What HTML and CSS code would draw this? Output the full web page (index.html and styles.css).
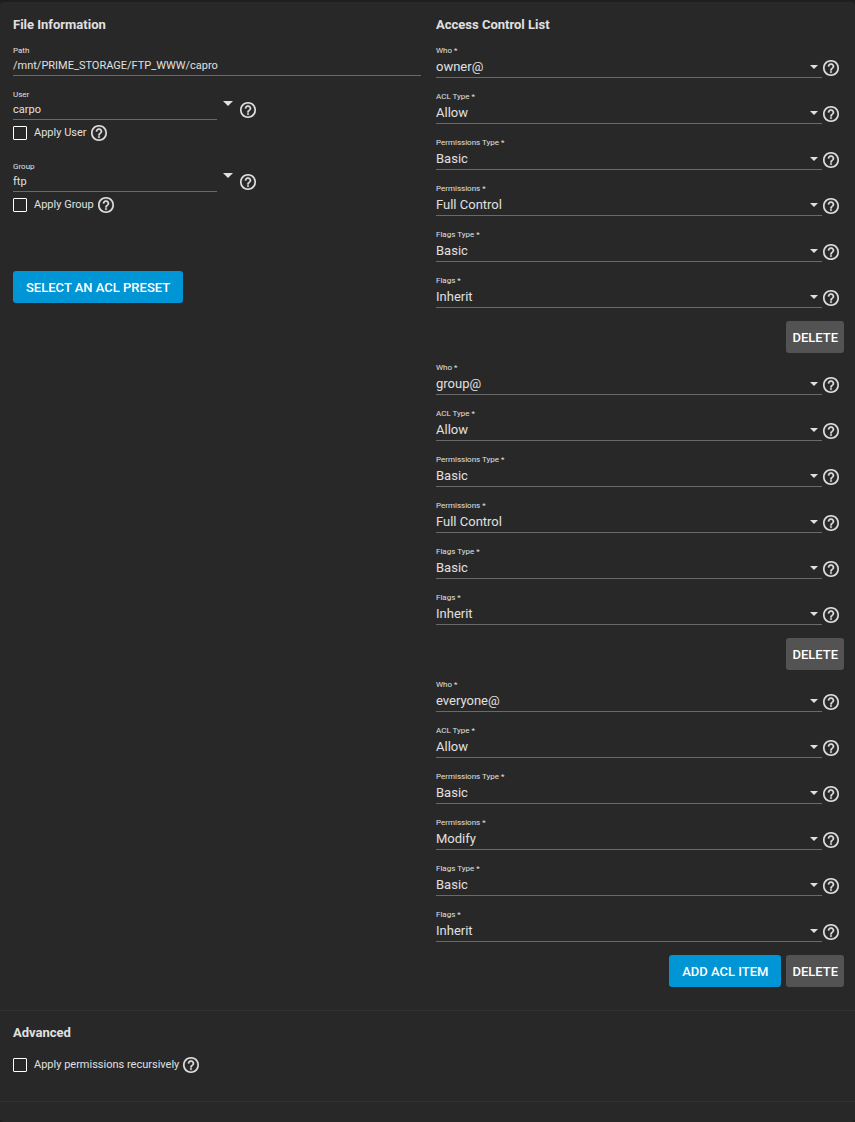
FILE: index.html
```html
<!DOCTYPE html>
<html lang="en">
  <head>
    <meta charset="UTF-8" />
    <meta name="viewport" content="width=device-width, initial-scale=1.0" />
    <title>Edit ACL</title>
    <link rel="stylesheet" href="styles.css">
  </head>
  <body>
    <svg class="sprite" aria-hidden="true">
      <symbol id="help" viewBox="2 2 20 20">
        <path d="M11 18h2v-2h-2v2zm1-16C6.480 2 2 6.480 2 12s4.480 10 10 10 10-4.480 10-10S17.520 2 12 2zm0 18c-4.410 0-8-3.590-8-8s3.590-8 8-8 8 3.590 8 8-3.590 8-8 8zm0-14c-2.210 0-4 1.790-4 4h2c0-1.100.9-2 2-2s2 .9 2 2c0 2-3 1.750-3 5h2c0-2.250 3-2.500 3-5 0-2.210-1.790-4-4-4z" />
      </symbol>
    </svg>
    <form class="card">
      <div class="columns">
        <section>
          <h2>File Information</h2>
          <div class="field">
            <label for="path">Path</label>
            <input type="text" id="path" value="/mnt/PRIME_STORAGE/FTP_WWW/capro" readonly />
          </div>
          <div class="owner">
            <div class="combo">
              <div class="field">
                <label for="user">User</label>
                <input type="text" id="user" value="carpo" />
              </div>
              <button type="button" class="toggle" aria-label="Show users"><span class="arrow"></span></button>
              <svg class="help"><use href="#help" /></svg>
            </div>
            <div class="check">
              <input type="checkbox" id="apply-user" />
              <label for="apply-user">Apply User</label>
              <svg class="help"><use href="#help" /></svg>
            </div>
          </div>
          <div class="owner">
            <div class="combo">
              <div class="field">
                <label for="group">Group</label>
                <input type="text" id="group" value="ftp" />
              </div>
              <button type="button" class="toggle" aria-label="Show groups"><span class="arrow"></span></button>
              <svg class="help"><use href="#help" /></svg>
            </div>
            <div class="check">
              <input type="checkbox" id="apply-group" />
              <label for="apply-group">Apply Group</label>
              <svg class="help"><use href="#help" /></svg>
            </div>
          </div>
          <button type="button" class="btn primary preset">SELECT AN ACL PRESET</button>
        </section>
        <section>
          <h2>Access Control List</h2>
          <div class="acl"></div>
        </section>
      </div>
      <section class="advanced">
        <h2>Advanced</h2>
        <div class="check">
          <input type="checkbox" id="recursive" />
          <label for="recursive">Apply permissions recursively</label>
          <svg class="help"><use href="#help" /></svg>
        </div>
      </section>
    </form>
    <script src="acl.js"></script>
  </body>
</html>
```

FILE: styles.css
```css
* {
  box-sizing: border-box;
}
body {
  margin: 0;
  padding-top: 2px;
  background-color: #1e1e1e;
  color: #e0e0e0;
  font-family: Roboto, "Liberation Sans", sans-serif;
  font-size: 13px;
}
.sprite {
  display: none;
}
.card {
  min-height: calc(100vh - 2px);
  background-color: #282828;
  border-radius: 4px;
}
.columns {
  display: grid;
  grid-template-columns: 1fr 1fr;
  gap: 15px;
  padding: 15px 11px 17px 13px;
}
h2 {
  margin: 0 0 9px;
  font-size: 13px;
  font-weight: 700;
  line-height: 16px;
}
input,
select,
button {
  margin: 0;
  padding: 0;
  border: 0;
  border-radius: 0;
  background: none;
  color: inherit;
  font: inherit;
}

/* fields */
.field {
  display: flex;
  flex-direction: column;
  padding-top: 4px;
}
.field label {
  font-size: 8px;
  line-height: 9px;
}
.field input,
.field select {
  width: 100%;
  border-bottom: 1px solid #6a6a6a;
}
.field input {
  height: 21px;
  font-size: 11px;
}
.field select {
  height: 23px;
  appearance: none;
}
.help {
  width: 16px;
  height: 16px;
  fill: #e0e0e0;
  stroke: #e0e0e0;
  stroke-width: 0.3;
}
.arrow {
  display: block;
  border: 4px solid transparent;
  border-top-color: #e0e0e0;
  border-bottom: 0;
}

/* user and group */
.owner {
  height: 62px;
  margin-top: 10px;
}
.combo {
  display: grid;
  grid-template-columns: 50% 10px 1fr;
  align-items: center;
  column-gap: 6px;
}
.combo .arrow {
  border-width: 5px 5px 0;
}
.combo .help {
  margin: 14px 0 0 1px;
}
.check {
  display: flex;
  align-items: center;
  height: 16px;
  font-size: 11px;
}
.owner .check {
  margin-top: 5px;
}
.check label {
  padding-bottom: 2px;
}
.check input {
  width: 14px;
  height: 14px;
  margin-right: 7px;
  border: 1px solid #fff;
  border-radius: 1px;
  appearance: none;
}
.check input:checked {
  background-color: #0095d5;
}
.check .help {
  margin-left: 4px;
}

/* buttons */
.btn {
  height: 32px;
  padding: 0 6px;
  border-radius: 3px;
  background-color: #535353;
  color: #fff;
  font-weight: 500;
  cursor: pointer;
}
.primary {
  padding: 0 13px;
  background-color: #0095d5;
}
.preset {
  margin-top: 51px;
}

/* access control list */
.row {
  display: grid;
  grid-template-columns: 1fr 16px;
  align-items: end;
  column-gap: 1px;
  padding: 0 5px 10px 0;
}
.row .help {
  margin-bottom: 2px;
}
.select {
  display: grid;
  align-items: center;
}
.select select,
.select .arrow {
  grid-area: 1 / 1;
}
.select .arrow {
  justify-self: end;
  margin-right: 4px;
  pointer-events: none;
}
.actions {
  display: flex;
  justify-content: flex-end;
  gap: 5px;
  padding: 3px 0 6px;
}

.advanced {
  height: 92px;
  padding: 14px 13px;
  border-top: 1px solid #323232;
  border-bottom: 1px solid #323232;
}
.advanced h2 {
  margin-bottom: 16px;
}
```

FILE: acl.js
```js
const acl = document.querySelector(".acl");

const labels = ["Who", "ACL Type", "Permissions Type", "Permissions", "Flags Type", "Flags"];
const items = [
  ["owner@", "Allow", "Basic", "Full Control", "Basic", "Inherit"],
  ["group@", "Allow", "Basic", "Full Control", "Basic", "Inherit"],
  ["everyone@", "Allow", "Basic", "Modify", "Basic", "Inherit"],
];

let html = "";
items.forEach((item, i) => {
  item.forEach((value, j) => {
    const id = `acl-${i}-${j}`;
    html += `<div class="row">
      <div class="field">
        <label for="${id}">${labels[j]} *</label>
        <div class="select">
          <select id="${id}" required><option>${value}</option></select>
          <span class="arrow"></span>
        </div>
      </div>
      <svg class="help"><use href="#help" /></svg>
    </div>`;
  });
  const last = i === items.length - 1;
  html += `<div class="actions">
    ${last ? '<button type="button" class="btn primary">ADD ACL ITEM</button>' : ""}
    <button type="button" class="btn">DELETE</button>
  </div>`;
});
acl.innerHTML = html;
```
